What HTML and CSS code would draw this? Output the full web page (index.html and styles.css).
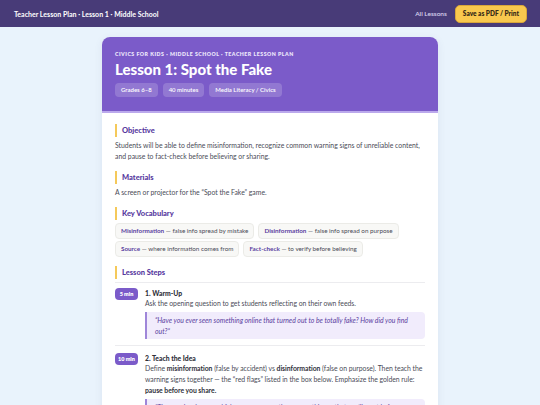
FILE: index.html
```html
<!DOCTYPE html>
<html>
<head>
<meta charset="utf-8">
<link rel="stylesheet" href="styles.css">
</head>
<body>
<header class="topbar">
  <div class="brand">Teacher Lesson Plan · Lesson 1 · Middle School</div>
  <nav class="actions">
    <a class="link">All Lessons</a>
    <button class="print">Save as PDF / Print</button>
  </nav>
</header>
<main class="page">
  <article class="card">
    <div class="hero">
      <div class="eyebrow">Civics for Kids · Middle School · Teacher Lesson Plan</div>
      <h1 class="title">Lesson 1: Spot the Fake</h1>
      <div class="pills">
        <span class="pill">Grades 6–8</span>
        <span class="pill">40 minutes</span>
        <span class="pill">Media Literacy / Civics</span>
      </div>
    </div>
    <div class="body">
      <section class="section">
        <h2 class="sec-title">Objective</h2>
        <p class="text">Students will be able to define misinformation, recognize common warning signs of unreliable content, and pause to fact-check before believing or sharing.</p>
      </section>
      <section class="section">
        <h2 class="sec-title">Materials</h2>
        <p class="text">A screen or projector for the “Spot the Fake” game.</p>
      </section>
      <section class="section">
        <h2 class="sec-title">Key Vocabulary</h2>
        <div class="chips">
          <span class="chip"><b>Misinformation</b> — false info spread by mistake</span>
          <span class="chip"><b>Disinformation</b> — false info spread on purpose</span>
          <span class="chip"><b>Source</b> — where information comes from</span>
          <span class="chip"><b>Fact-check</b> — to verify before believing</span>
        </div>
      </section>
      <section class="section">
        <div class="steps-head">
          <h2 class="sec-title">Lesson Steps</h2>
        </div>
        <div class="step">
          <span class="badge">5 min</span>
          <div class="step-main">
            <div class="step-title">1. Warm-Up</div>
            <p class="text">Ask the opening question to get students reflecting on their own feeds.</p>
            <blockquote class="quote">“Have you ever seen something online that turned out to be totally fake? How did you find out?”</blockquote>
          </div>
        </div>
        <div class="step">
          <span class="badge">10 min</span>
          <div class="step-main">
            <div class="step-title">2. Teach the Idea</div>
            <p class="text">Define <strong>misinformation</strong> (false by accident) vs <strong>disinformation</strong> (false on purpose). Then teach the warning signs together — the “red flags” listed in the box below. Emphasize the golden rule: <strong>pause before you share.</strong></p>
            <blockquote class="quote">“The people who spread <em>fake news</em> are counting on one thing — that you’ll react before you think. Slow down, check the source, and look for proof.”</blockquote>
          </div>
        </div>
      </section>
    </div>
  </article>
</main>
</body>
</html>
```

FILE: styles.css
```css
* { box-sizing: border-box; }
html, body { margin: 0; padding: 0; }
body {
  background: #e9f3fc;
  font-family: "Lato", "Noto Sans", sans-serif;
  color: #3f4150;
}
.topbar {
  height: 27px;
  background: #483b78;
  display: flex;
  align-items: center;
  justify-content: space-between;
  padding: 0 13px 0 14px;
}
.brand {
  color: #fff;
  font-weight: 700;
  font-size: 7px;
}
.actions {
  display: flex;
  align-items: center;
  gap: 8px;
}
.link {
  color: #d9d3ee;
  font-size: 6.5px;
  font-weight: 600;
}
.print {
  background: #f9c84e;
  border: 1px solid #d9a63a;
  border-radius: 5px;
  color: #3a2d18;
  font-family: inherit;
  font-weight: 800;
  font-size: 6.5px;
  height: 18px;
  padding: 0 7px;
}
.page {
  display: flex;
  justify-content: center;
  padding-top: 10px;
}
.card {
  width: 336px;
  background: #fff;
  border-radius: 8px 8px 0 0;
  overflow: hidden;
  box-shadow: 0 2px 8px rgba(70, 60, 120, 0.08);
}
.hero {
  background: #7b5bc9;
  padding: 14px 13px 14px 13px;
  border-bottom: 2px solid #bba9ec;
  color: #fff;
}
.eyebrow {
  font-size: 5.2px;
  line-height: 7px;
  font-weight: 800;
  letter-spacing: 0.1em;
  text-transform: uppercase;
  color: #ece6fb;
}
.title {
  margin: 2px 0 5px;
  font-size: 15px;
  font-weight: 900;
  line-height: 18px;
}
.pills {
  display: flex;
  gap: 5px;
}
.pill {
  background: rgba(255, 255, 255, 0.18);
  border-radius: 4px;
  font-size: 6px;
  font-weight: 600;
  line-height: 14px;
  padding: 0 6px;
}
.body {
  padding: 11px 13px 0 13px;
}
.section {
  margin-bottom: 9px;
}
.sec-title {
  margin: 0 0 3px;
  border-left: 2px solid #f5c95a;
  padding: 1px 0 1px 5px;
  font-size: 7.5px;
  font-weight: 900;
  color: #56389e;
  line-height: 11px;
}
.steps-head {
  border-bottom: 1px solid #ececef;
  padding-bottom: 3px;
  margin-bottom: 5px;
}
.steps-head .sec-title { margin: 0; }
.text {
  margin: 0;
  font-size: 6.85px;
  line-height: 11px;
  color: #4a4b57;
}
.text strong { color: #2f303a; font-weight: 700; }
.step .text { letter-spacing: -0.03px; }
.chips {
  display: flex;
  flex-wrap: wrap;
  gap: 2px 4px;
}
.chip {
  background: #f8f8f6;
  border: 1px solid #ebebe7;
  border-radius: 4px;
  font-size: 6.3px;
  line-height: 14px;
  padding: 0 5px;
  color: #4a4b57;
}
.chip b { color: #5a3ea0; font-weight: 700; }
.step {
  display: flex;
  gap: 7px;
  padding-bottom: 6px;
  margin-bottom: 7px;
  border-bottom: 1px solid #ececef;
}
.badge {
  flex: none;
  align-self: flex-start;
  background: #7b5bc9;
  color: #fff;
  border-radius: 4px;
  font-size: 5.5px;
  font-weight: 800;
  min-width: 23px;
  text-align: center;
  line-height: 12px;
  padding: 0 3px;
}
.step-main { flex: 1; }
.step-title {
  font-size: 6.8px;
  font-weight: 900;
  color: #2f303a;
  line-height: 10px;
}
.quote {
  margin: 3px 0 0;
  background: #f1ecfc;
  border-left: 2px solid #9f86d9;
  border-radius: 0 4px 4px 0;
  padding: 2.5px 8px;
  font-style: italic;
  font-size: 6.85px;
  line-height: 11px;
  color: #5a3ea0;
}
```
